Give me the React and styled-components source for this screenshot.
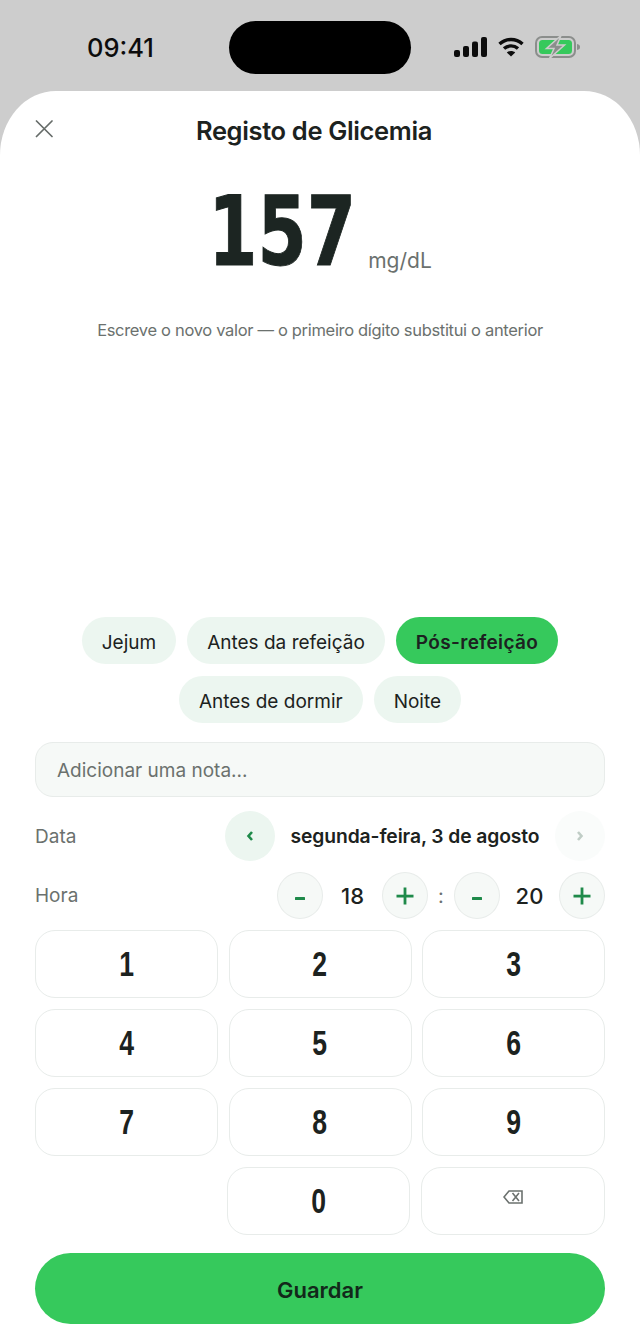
import React from "react";
import styled, { createGlobalStyle } from "styled-components";

const GlobalStyle = createGlobalStyle`
  * { box-sizing: border-box; }
  html, body { margin: 0; padding: 0; }
  body {
    background: #cdcdcd;
    font-family: "Inter", "Noto Sans", sans-serif;
    color: #1c2220;
  }
`;

const Page = styled.div`
  width: 640px;
  height: 1343px;
  display: flex;
  flex-direction: column;
  background: #cdcdcd;
  overflow: hidden;
`;

const StatusBar = styled.div`
  height: 91px;
  flex: none;
  display: flex;
  align-items: flex-start;
  padding: 21px 0 0 87px;
`;
const Clock = styled.div`
  width: 142px;
  height: 53px;
  display: flex;
  align-items: center;
  font-size: 25.5px;
  font-weight: 500;
  color: #0c0c0c;
`;
const Island = styled.div`
  width: 182px;
  height: 53px;
  border-radius: 27px;
  background: #000;
`;
const StatusIcons = styled.div`
  height: 53px;
  display: flex;
  align-items: center;
  margin-left: 43px;
  gap: 11px;
  margin-top: -1px;
`;

const Sheet = styled.div`
  flex: 1;
  background: #fff;
  border-radius: 56px 56px 0 0 / 64px 64px 0 0;
  padding: 0 35px 19px;
  display: flex;
  flex-direction: column;
`;
const Header = styled.div`
  height: 78px;
  flex: none;
  display: flex;
  align-items: center;
`;
const CloseBtn = styled.div`
  width: 18px;
  height: 18px;
  margin-top: -3px;
  color: #666c69;
`;
const Title = styled.div`
  flex: 1;
  text-align: center;
  font-size: 25.5px;
  font-weight: 600;
  letter-spacing: -0.35px;
  color: #1c2220;
  padding-right: 30px;
`;
const ValueRow = styled.div`
  height: 100px;
  flex: none;
  margin-top: 13px;
  display: flex;
  justify-content: center;
  align-items: flex-end;
  gap: 16px;
  padding-left: 4px;
`;
const BigNumber = styled.div`
  width: 140px;
  height: 100px;
  line-height: 100px;
  display: flex;
  justify-content: center;
  font-family: "DejaVu Sans", sans-serif;
  font-size: 97px;
  font-weight: 700;
  color: #1c2522;
  -webkit-text-stroke: 1px #1c2522;
  span {
    display: inline-block;
    transform: scaleX(0.73);
  }
`;
const Unit = styled.div`
  font-size: 21px;
  font-weight: 400;
  color: #6b716e;
  line-height: 20px;
  margin-bottom: 11px;
`;
const Hint = styled.div`
  margin-top: 37px;
  text-align: center;
  font-size: 16.5px;
  letter-spacing: -0.32px;
  color: #6b716e;
  line-height: 22px;
`;
const Spacer = styled.div`
  flex: 1;
`;
const Chips = styled.div`
  display: flex;
  flex-wrap: wrap;
  justify-content: center;
  gap: 12px 11px;
  padding: 0 30px;
`;
const Chip = styled.div`
  height: 47px;
  padding: 3px 20px 0;
  border-radius: 24px;
  display: flex;
  align-items: center;
  font-size: 19px;
  font-weight: ${(p) => (p.$active ? 600 : 400)};
  letter-spacing: ${(p) => (p.$active ? "0.35px" : "0")};
  color: #1c2220;
  background: ${(p) => (p.$active ? "#36c95c" : "#ecf6f0")};
`;
const NoteBox = styled.div`
  margin-top: 19px;
  height: 55px;
  border-radius: 18px;
  border: 1.5px solid #e8ecea;
  background: #f6f9f7;
  display: flex;
  align-items: center;
  padding: 2px 0 0 21px;
  font-size: 19px;
  color: #6b716e;
`;
const DateRow = styled.div`
  margin-top: 14px;
  height: 50px;
  display: flex;
  align-items: center;
`;
const RowLabel = styled.div`
  flex: 1;
  font-size: 19px;
  color: #6b716e;
`;
const NavBtn = styled.div`
  width: 50px;
  height: 50px;
  border-radius: 50%;
  display: flex;
  align-items: center;
  justify-content: center;
  background: ${(p) => (p.$faded ? "#fafcfb" : "#ecf6f0")};
  color: ${(p) => (p.$faded ? "#c0cdc6" : "#1f8a4a")};
`;
const DateText = styled.div`
  width: 280px;
  text-align: center;
  font-size: 19.3px;
  font-weight: 600;
  letter-spacing: -0.1px;
  color: #1c2220;
`;
const TimeRow = styled.div`
  margin-top: 11px;
  height: 47px;
  display: flex;
  align-items: center;
`;
const Step = styled.div`
  width: 46px;
  height: 47px;
  border-radius: 50%;
  border: 1.5px solid #e8ecea;
  background: #f6f9f7;
  display: flex;
  align-items: center;
  justify-content: center;
  color: #1f8a4a;
`;
const TimeValue = styled.div`
  width: 59px;
  text-align: center;
  font-size: 22px;
  font-weight: 500;
  color: #1c2220;
`;
const Colon = styled.div`
  width: 26px;
  text-align: center;
  font-size: 20px;
  color: #6b716e;
`;
const Keypad = styled.div`
  margin-top: 11px;
  display: grid;
  grid-template-columns: repeat(3, 1fr);
  gap: 11px 10.5px;
`;
const LastRow = styled.div`
  margin-top: 11px;
  display: grid;
  grid-template-columns: 181.5px 183px 184.5px;
  gap: 10.5px;
`;
const Key = styled.div`
  height: 68px;
  border-radius: 20px;
  border: 1.5px solid #e8ecea;
  background: #fff;
  display: flex;
  align-items: center;
  justify-content: center;
  font-family: "Liberation Sans", sans-serif;
  font-size: 35px;
  font-weight: 700;
  color: #1c2220;
  span {
    display: inline-block;
    transform: scaleX(0.76);
  }
`;
const SaveBtn = styled.div`
  margin-top: 18px;
  height: 71px;
  border-radius: 36px;
  background: #36c95c;
  display: flex;
  align-items: center;
  justify-content: center;
  padding-top: 2px;
  font-size: 22px;
  font-weight: 600;
  color: #12281a;
  flex: none;
`;

const Signal = () => (
  <svg width="33" height="20" viewBox="0 0 33 20" fill="#0c0c0c">
    <rect x="0" y="13" width="6" height="7" rx="2" />
    <rect x="9" y="9" width="6" height="11" rx="2" />
    <rect x="18" y="4.500" width="6" height="15.500" rx="2" />
    <rect x="27" y="0" width="6" height="20" rx="2" />
  </svg>
);

const Wifi = () => (
  <svg width="26" height="20" viewBox="0 0 26 20" fill="none" stroke="#0c0c0c" strokeWidth="3.400">
    <path d="M1.500 7 C8 1 18 1 24.500 7" />
    <path d="M6 11.600 C10 8 16 8 20 11.600" />
    <path d="M13 19.500 L8.800 15.400 C11 13.400 15 13.400 17.200 15.400 Z" fill="#0c0c0c" stroke="none" />
  </svg>
);

const Battery = () => (
  <svg width="46" height="24" viewBox="0 0 46 24">
    <rect x="1" y="2" width="39" height="20" rx="6" fill="none" stroke="#8b8e8c" strokeWidth="2" />
    <rect x="4" y="5" width="33" height="14" rx="3.500" fill="#36c95c" />
    <path d="M42 9 C44.500 9.500 45 10.500 45 12 C45 13.500 44.500 14.500 42 15 Z" fill="#8b8e8c" />
    <path d="M26 0.500 L11.500 13.500 H19 L14.500 23.500 L29.500 10 H22 Z" fill="#8b8e8c" stroke="#cdcdcd" strokeWidth="1.500" />
  </svg>
);

const CloseIcon = () => (
  <svg width="18" height="18" viewBox="0 0 18 18" fill="none" stroke="currentColor" strokeWidth="1.700" strokeLinecap="round">
    <path d="M1.500 1 L17 16.500 M17 1 L1.500 16.500" />
  </svg>
);

const Chevron = ({ left }) => (
  <svg width="8" height="12" viewBox="0 0 8 12" fill="none" stroke="currentColor" strokeWidth="2.600">
    <path d={left ? "M6 2 L2.500 6 L6 10" : "M2 2 L5.500 6 L2 10"} />
  </svg>
);

const Minus = () => (
  <svg width="12" height="14" viewBox="0 0 12 14" fill="currentColor">
    <rect x="1" y="8" width="10" height="3" rx="0.500" />
  </svg>
);

const Plus = () => (
  <svg width="18" height="18" viewBox="0 0 18 18" fill="currentColor">
    <rect x="0.500" y="7.700" width="17" height="2.800" />
    <rect x="7.600" y="0.500" width="2.800" height="17" />
  </svg>
);

const BackspaceIcon = () => (
  <svg width="20" height="14" viewBox="0 0 20 14" fill="none" stroke="#6b716e" strokeWidth="1.600" style={{ marginTop: -8 }}>
    <path d="M6 1 H19 V13 H6 L1 7 Z" />
    <path d="M9.500 3 L16 11 M16 3 L9.500 11" />
  </svg>
);

const chipsData = [
  { label: "Jejum" },
  { label: "Antes da refeição" },
  { label: "Pós-refeição", active: true },
  { label: "Antes de dormir" },
  { label: "Noite" },
];

const keys = ["1", "2", "3", "4", "5", "6", "7", "8", "9"];

export default function App() {
  return (
    <Page>
      <GlobalStyle />
      <StatusBar>
        <Clock>09:41</Clock>
        <Island />
        <StatusIcons>
          <Signal />
          <Wifi />
          <Battery />
        </StatusIcons>
      </StatusBar>
      <Sheet>
        <Header>
          <CloseBtn>
            <CloseIcon />
          </CloseBtn>
          <Title>Registo de Glicemia</Title>
        </Header>
        <ValueRow>
          <BigNumber>
            <span>157</span>
          </BigNumber>
          <Unit>mg/dL</Unit>
        </ValueRow>
        <Hint>Escreve o novo valor — o primeiro dígito substitui o anterior</Hint>
        <Spacer />
        <Chips>
          {chipsData.map((c) => (
            <Chip key={c.label} $active={c.active}>
              {c.label}
            </Chip>
          ))}
        </Chips>
        <NoteBox>Adicionar uma nota...</NoteBox>
        <DateRow>
          <RowLabel>Data</RowLabel>
          <NavBtn>
            <Chevron left />
          </NavBtn>
          <DateText>segunda-feira, 3 de agosto</DateText>
          <NavBtn $faded>
            <Chevron />
          </NavBtn>
        </DateRow>
        <TimeRow>
          <RowLabel>Hora</RowLabel>
          <Step>
            <Minus />
          </Step>
          <TimeValue>18</TimeValue>
          <Step>
            <Plus />
          </Step>
          <Colon>:</Colon>
          <Step>
            <Minus />
          </Step>
          <TimeValue>20</TimeValue>
          <Step>
            <Plus />
          </Step>
        </TimeRow>
        <Keypad>
          {keys.map((k) => (
            <Key key={k}>
              <span>{k}</span>
            </Key>
          ))}
        </Keypad>
        <LastRow>
          <div />
          <Key>
            <span>0</span>
          </Key>
          <Key>
            <BackspaceIcon />
          </Key>
        </LastRow>
        <SaveBtn>Guardar</SaveBtn>
      </Sheet>
    </Page>
  );
}
